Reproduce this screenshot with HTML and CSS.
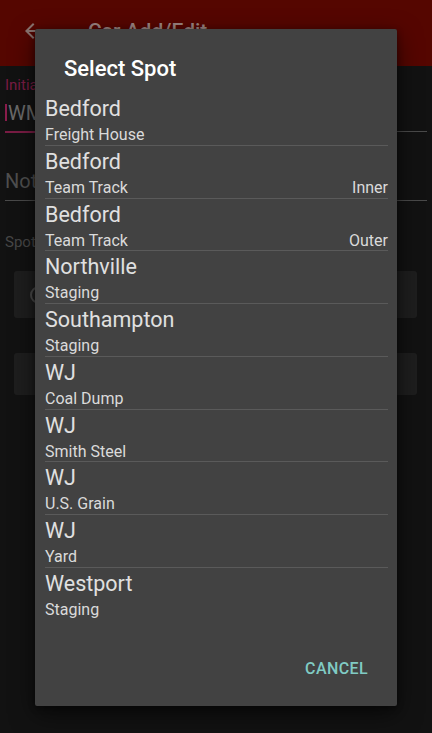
FILE: index.html
```html
<!DOCTYPE html>
<html>
<head>
<meta charset="utf-8">
<link rel="stylesheet" href="styles.css">
</head>
<body>
<div class="screen">
  <header class="appbar">
    <svg class="back" viewBox="0 0 24 24" width="24" height="24"><path d="M20 11H7.83l5.59-5.59L12 4l-8 8 8 8 1.41-1.41L7.83 13H20v-2z" fill="currentColor"/></svg>
    <span class="apptitle">Car Add/Edit</span>
  </header>
  <main class="form">
    <div class="field focused">
      <div class="flabel">Initials</div>
      <div class="input"><span class="cursor"></span>WM</div>
      <div class="focusline"></div>
    </div>
    <div class="field notes">
      <div class="input hint">Notes</div>
    </div>
    <div class="spotlabel">Spot</div>
    <div class="box box1"><span class="radio"></span></div>
    <div class="box box2"></div>
  </main>

  <div class="dialog">
    <div class="dtitle">Select Spot</div>
    <div class="list">
      <div class="item"><div class="primary">Bedford</div><div class="secondary"><span>Freight House</span></div></div>
      <div class="item"><div class="primary">Bedford</div><div class="secondary"><span>Team Track</span><span>Inner</span></div></div>
      <div class="item"><div class="primary">Bedford</div><div class="secondary"><span>Team Track</span><span>Outer</span></div></div>
      <div class="item"><div class="primary">Northville</div><div class="secondary"><span>Staging</span></div></div>
      <div class="item"><div class="primary">Southampton</div><div class="secondary"><span>Staging</span></div></div>
      <div class="item"><div class="primary">WJ</div><div class="secondary"><span>Coal Dump</span></div></div>
      <div class="item"><div class="primary">WJ</div><div class="secondary"><span>Smith Steel</span></div></div>
      <div class="item"><div class="primary">WJ</div><div class="secondary"><span>U.S. Grain</span></div></div>
      <div class="item"><div class="primary">WJ</div><div class="secondary"><span>Yard</span></div></div>
      <div class="item last"><div class="primary">Westport</div><div class="secondary"><span>Staging</span></div></div>
    </div>
    <div class="actions"><span class="cancel">CANCEL</span></div>
  </div>
</div>
</body>
</html>
```

FILE: styles.css
```css
* { box-sizing: border-box; }
html, body { margin: 0; padding: 0; }
body {
  background: #121212;
  font-family: Roboto, "Noto Sans", sans-serif;
  width: 432px;
  height: 733px;
  overflow: hidden;
}
.screen {
  position: relative;
  width: 432px;
  height: 733px;
  background: #121212;
}
.appbar {
  height: 66px;
  background: #550600;
  display: flex;
  align-items: center;
  padding-left: 21px;
  padding-bottom: 4px;
}
.back { color: #8a7470; display: block; }
.apptitle {
  margin-left: 43px;
  font-size: 21px;
  font-weight: 500;
  color: #9a8480;
}
.form {
  display: flex;
  flex-direction: column;
  padding: 0 5px;
}
.field { position: relative; }
.flabel {
  margin-top: 10px;
  font-size: 15px;
  line-height: 18px;
  color: #7a1c44;
}
.input {
  display: flex;
  align-items: center;
  height: 38px;
  font-size: 20px;
  color: #6a6a6a;
  border-bottom: 1px solid #4a4a4a;
}
.cursor {
  width: 2px;
  height: 17px;
  background: #8a1d4c;
  margin-right: 1px;
}
.focusline {
  position: absolute;
  left: 0;
  bottom: -1px;
  width: 120px;
  height: 2px;
  background: #7a1c44;
}
.notes { margin-top: 30px; }
.notes .input { height: 39px; border-bottom-color: #4a4a4a; }
.hint { color: #4f4f4f; }
.spotlabel {
  margin-top: 32px;
  font-size: 15px;
  line-height: 18px;
  color: #474747;
}
.box {
  margin: 0 10px 0 9px;
  background: #1e1e1e;
  border-radius: 3px;
  display: flex;
  align-items: center;
}
.box1 { margin-top: 20px; height: 47px; padding-left: 16px; }
.box2 { margin-top: 35px; height: 42px; }
.radio {
  width: 18px;
  height: 18px;
  border: 2px solid #4c4c4c;
  border-radius: 50%;
}

.dialog {
  position: absolute;
  left: 35px;
  top: 29px;
  width: 362px;
  height: 677px;
  background: #424242;
  border-radius: 2px;
  box-shadow: 0 8px 24px rgba(0,0,0,0.55), 0 2px 6px rgba(0,0,0,0.4);
  display: flex;
  flex-direction: column;
}
.dtitle {
  padding: 27px 0 0 29px;
  font-size: 22px;
  line-height: 26px;
  font-weight: 500;
  color: #ffffff;
}
.list {
  margin-top: 11px;
  padding: 0 9px 0 10px;
}
.item {
  height: 52.75px;
  border-bottom: 1px solid #5a5a5a;
  padding-top: 2px;
  display: flex;
  flex-direction: column;
}
.item.last { border-bottom: none; }
.primary {
  font-size: 21.5px;
  line-height: 28px;
  color: #e0e0e0;
}
.secondary {
  margin-top: 2px;
  display: flex;
  justify-content: space-between;
  font-size: 16px;
  line-height: 20px;
  color: #dadada;
}
.actions {
  margin-top: auto;
  display: flex;
  justify-content: flex-end;
  padding: 0 29px 27px 0;
}
.cancel {
  font-size: 16px;
  line-height: 20px;
  font-weight: 500;
  letter-spacing: 0.4px;
  color: #80cbc4;
}
```
